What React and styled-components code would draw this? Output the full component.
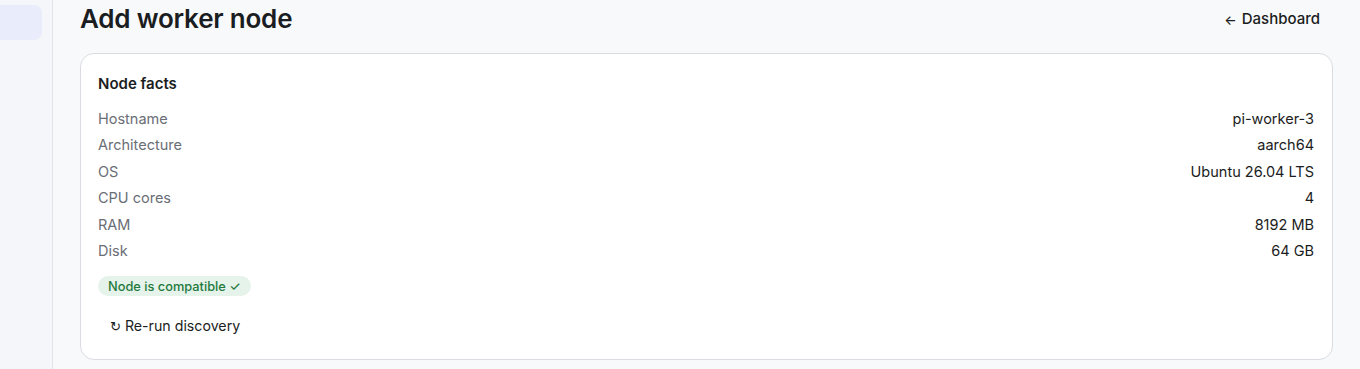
import React from "react";
import styled, { createGlobalStyle } from "styled-components";

const Global = createGlobalStyle`
  html, body { margin: 0; padding: 0; background: #f8f9fb; }
  body { font-family: Inter, "Noto Sans", sans-serif; color: #1a1d21; }
  * { box-sizing: border-box; }
`;

const Shell = styled.div`
  display: flex;
  min-height: 369px;
`;

const Sidebar = styled.aside`
  width: 53px;
  flex: none;
  background: #f5f6fa;
  border-right: 1px solid #e2e4e9;
  padding: 5px 10px 0 0;
`;

const NavPill = styled.div`
  height: 35px;
  border-radius: 0 8px 8px 0;
  background: #e9ecfa;
`;

const Main = styled.main`
  flex: 1;
  padding: 0 27px 10px 27px;
`;

const Header = styled.header`
  display: flex;
  align-items: center;
  justify-content: space-between;
  height: 36px;
  margin-bottom: 17px;
`;

const Title = styled.h1`
  margin: 0;
  font-size: 26px;
  font-weight: 600;
  letter-spacing: -0.2px;
  color: #1a1d21;
`;

const BackLink = styled.a`
  font-size: 15px;
  font-weight: 500;
  color: #1a1d21;
  text-decoration: none;
  padding-right: 13px;
  display: flex;
  align-items: center;
  gap: 5px;
`;

const Arrow = styled.span`
  font-size: 13px;
  margin-top: 3px;
`;

const Card = styled.section`
  background: #fff;
  border: 1px solid #d9dce1;
  border-radius: 14px;
  padding: 18px 18px 18px 17px;
  display: flex;
  flex-direction: column;
`;

const CardTitle = styled.h2`
  margin: 0;
  font-size: 15px;
  font-weight: 600;
  line-height: 24px;
`;

const Facts = styled.dl`
  margin: 9px 0 0 0;
  display: flex;
  flex-direction: column;
`;

const Row = styled.div`
  display: flex;
  justify-content: space-between;
  align-items: center;
  height: 26.5px;
  font-size: 14.5px;
`;

const Label = styled.dt`
  color: #6a6e75;
`;

const Value = styled.dd`
  margin: 0;
  color: #1a1d21;
`;

const Actions = styled.div`
  margin-top: 12px;
  display: flex;
  flex-direction: column;
  align-items: flex-start;
  gap: 13px;
`;

const Badge = styled.span`
  display: inline-flex;
  align-items: center;
  height: 20px;
  padding: 0 10px;
  border-radius: 999px;
  background: #e6f3ea;
  color: #1f7a3f;
  font-size: 12.8px;
  font-weight: 500;
`;

const GhostButton = styled.button`
  height: 32px;
  padding: 0 12px;
  border: none;
  background: transparent;
  font-family: inherit;
  font-size: 14.2px;
  color: #1a1d21;
  border-radius: 8px;
  cursor: pointer;
`;

const Glyph = styled.span`
  font-family: "DejaVu Sans", sans-serif;
  font-size: 13px;
`;

const facts = [
  ["Hostname", "pi-worker-3"],
  ["Architecture", "aarch64"],
  ["OS", "Ubuntu 26.04 LTS"],
  ["CPU cores", "4"],
  ["RAM", "8192 MB"],
  ["Disk", "64 GB"],
];

export default function App() {
  return (
    <>
      <Global />
      <Shell>
        <Sidebar>
          <NavPill />
        </Sidebar>
        <Main>
          <Header>
            <Title>Add worker node</Title>
            <BackLink href="#">
              <Arrow>←</Arrow>Dashboard
            </BackLink>
          </Header>
          <Card>
            <CardTitle>Node facts</CardTitle>
            <Facts>
              {facts.map(([k, v]) => (
                <Row key={k}>
                  <Label>{k}</Label>
                  <Value>{v}</Value>
                </Row>
              ))}
            </Facts>
            <Actions>
              <Badge>Node is compatible ✓</Badge>
              <GhostButton>
                <Glyph>↻</Glyph> Re-run discovery
              </GhostButton>
            </Actions>
          </Card>
        </Main>
      </Shell>
    </>
  );
}
